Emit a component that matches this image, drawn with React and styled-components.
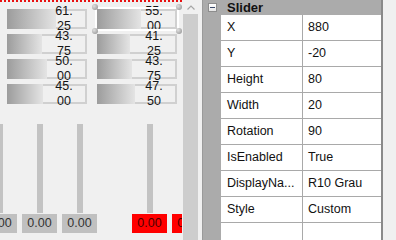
import styled, { createGlobalStyle } from "styled-components";

const GlobalStyle = createGlobalStyle`
  html, body {
    margin: 0;
    padding: 0;
    background: #f0f0f0;
  }
  body {
    font-family: "Liberation Sans", Arial, sans-serif;
  }
`;

const bars = [
  [61.25, 55.0],
  [43.75, 41.25],
  [50.0, 43.75],
  [45.0, 47.5],
];

const sliders = [
  { left: -18, red: false },
  { left: 22, red: false },
  { left: 62, red: false },
  { left: 132, red: true },
  { left: 172, red: true },
];

const properties = [
  ["X", "880"],
  ["Y", "-20"],
  ["Height", "80"],
  ["Width", "20"],
  ["Rotation", "90"],
  ["IsEnabled", "True"],
  ["DisplayNa...", "R10 Grau"],
  ["Style", "Custom"],
  ["", ""],
];

const App = () => {
  return (
    <Window>
      <GlobalStyle />
      <Canvas>
        <BarGrid>
          {bars.map((row, r) =>
            row.map((value, c) => (
              <Bar key={`${r}-${c}`}>
                <Fill style={{ width: `${value}%` }} />
                <BarLabel>{value.toFixed(2)}</BarLabel>
                {r === 0 && c === 1 && (
                  <Selection>
                    <Handle $x="left" $y="top" />
                    <Handle $x="right" $y="top" />
                    <Handle $x="left" $y="bottom" />
                    <Handle $x="right" $y="bottom" />
                  </Selection>
                )}
              </Bar>
            ))
          )}
        </BarGrid>
        {sliders.map((s, i) => (
          <SliderItem key={i} style={{ left: s.left }}>
            <Track />
            <ValueBox $red={s.red}>0.00</ValueBox>
          </SliderItem>
        ))}
      </Canvas>
      <ScrollBar>
        <ArrowButton>
          <svg width="8" height="5" viewBox="0 0 8 5">
            <polyline
              points="0.5,4.5 4,1 7.5,4.5"
              fill="none"
              stroke="#a6a6a6"
              strokeWidth="1.2"
            />
          </svg>
        </ArrowButton>
        <Thumb />
      </ScrollBar>
      <Splitter />
      <PropertyGrid>
        <Header>
          <Margin>
            <Collapse />
          </Margin>
          <HeaderTitle>Slider</HeaderTitle>
        </Header>
        {properties.map(([name, value], i) => (
          <PropRow key={i}>
            <Margin />
            <NameCell>{name}</NameCell>
            <ValueCell>{value}</ValueCell>
          </PropRow>
        ))}
      </PropertyGrid>
      <EdgeStrip />
    </Window>
  );
};

const Window = styled.div`
  display: flex;
  flex-direction: row;
  width: 396px;
  height: 240px;
  overflow: hidden;
  background: #f0f0f0;
`;

const Canvas = styled.div`
  position: relative;
  width: 182px;
  height: 240px;
  flex-shrink: 0;
  overflow: hidden;
  box-sizing: border-box;
  border-top: 2px dotted #e81010;
`;

const BarGrid = styled.div`
  display: grid;
  grid-template-columns: 80px 80px;
  column-gap: 10px;
  row-gap: 5px;
  padding: 7px 0 0 7px;
`;

const Bar = styled.div`
  position: relative;
  height: 20px;
  background: #f0f0f0;
  box-shadow: inset 0 0 0 2px #d0d0d0;
`;

const Fill = styled.div`
  height: 100%;
  background: linear-gradient(to right, #9c9c9c, #e4e4e4);
`;

const BarLabel = styled.div`
  position: absolute;
  left: 46px;
  top: -5px;
  width: 22px;
  font-size: 12.5px;
  line-height: 15px;
  color: #151515;
  text-align: center;
  word-break: break-all;
`;

const Selection = styled.div`
  position: absolute;
  inset: -2px;
  border: 2px solid #ffffff;
`;

const Handle = styled.span`
  position: absolute;
  width: 6px;
  height: 6px;
  border-radius: 50%;
  background: radial-gradient(circle at 35% 35%, #e0e0e0, #8c8c8c);
  ${(p) => (p.$x === "left" ? "left: -5px;" : "right: -5px;")}
  ${(p) => (p.$y === "top" ? "top: -5px;" : "bottom: -5px;")}
`;

const SliderItem = styled.div`
  position: absolute;
  top: 122px;
  width: 35px;
  display: flex;
  flex-direction: column;
  align-items: center;
  gap: 1px;
`;

const Track = styled.div`
  width: 6px;
  height: 89px;
  background: #c3c3c3;
`;

const ValueBox = styled.div`
  width: 35px;
  height: 19px;
  line-height: 19px;
  text-align: center;
  font-size: 12.5px;
  background: ${(p) => (p.$red ? "#ff0000" : "#c0c0c0")};
  color: ${(p) => (p.$red ? "#4a0000" : "#333333")};
`;

const ScrollBar = styled.div`
  width: 16px;
  flex-shrink: 0;
  display: flex;
  flex-direction: column;
  background: #f0f0f0;
`;

const ArrowButton = styled.div`
  height: 14px;
  display: flex;
  align-items: center;
  justify-content: center;
  padding-left: 1px;
`;

const Thumb = styled.div`
  flex: 1;
  margin-left: 1px;
  background: #cdcdcd;
`;

const Splitter = styled.div`
  width: 4px;
  flex-shrink: 0;
  background: #f0f0f0;
`;

const PropertyGrid = styled.div`
  width: 178px;
  flex-shrink: 0;
  display: flex;
  flex-direction: column;
  border-left: 1px solid #9a9a9a;
  border-right: 2px solid #8a8a8a;
  background: #ababab;
  font-size: 12.5px;
  color: #111111;
`;

const Header = styled.div`
  height: 26px;
  display: flex;
  align-items: center;
`;

const Margin = styled.div`
  width: 18px;
  flex-shrink: 0;
  align-self: stretch;
  display: flex;
  align-items: center;
  justify-content: center;
  background: #ababab;
`;

const Collapse = styled.span`
  position: relative;
  width: 9px;
  height: 9px;
  box-sizing: border-box;
  border: 1px solid #8d8d8d;
  background: linear-gradient(#ffffff, #e6e6e6);
  margin-top: -1px;

  &::after {
    content: "";
    position: absolute;
    left: 1px;
    right: 1px;
    top: 3px;
    height: 1px;
    background: #3c4a6a;
  }
`;

const HeaderTitle = styled.span`
  padding-left: 6px;
  font-weight: bold;
  font-size: 13px;
  color: #111111;
`;

const PropRow = styled.div`
  display: flex;
  height: 26px;
  flex-shrink: 0;
`;

const NameCell = styled.div`
  width: 82px;
  box-sizing: border-box;
  padding-left: 6px;
  background: #ffffff;
  border-right: 1px solid #a9a9a9;
  border-bottom: 1px solid #a9a9a9;
  line-height: 25px;
  white-space: nowrap;
  overflow: hidden;
`;

const ValueCell = styled.div`
  flex: 1;
  box-sizing: border-box;
  padding-left: 5px;
  background: #ffffff;
  border-bottom: 1px solid #a9a9a9;
  line-height: 25px;
  white-space: nowrap;
  overflow: hidden;
`;

const EdgeStrip = styled.div`
  flex: 1;
  background: #f0f0f0;
`;

export default App;
